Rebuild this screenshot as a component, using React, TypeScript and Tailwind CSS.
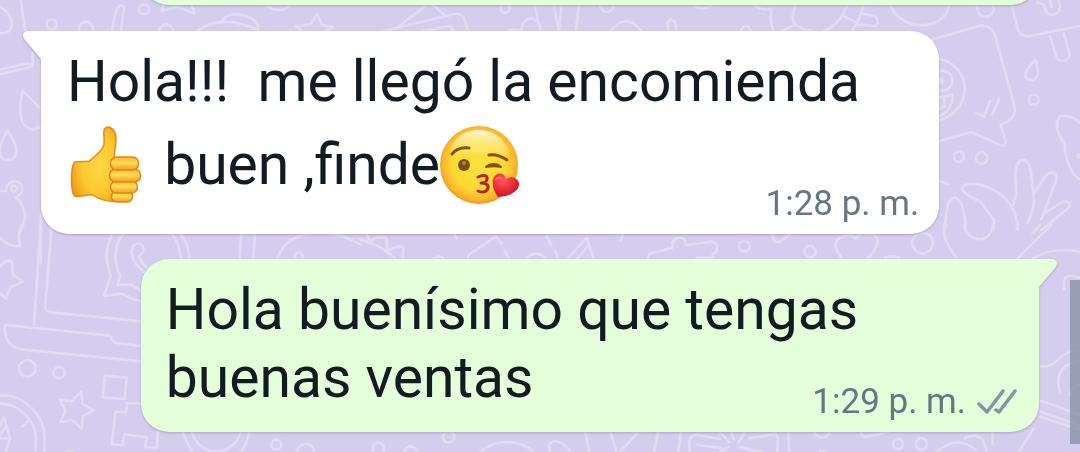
import React from 'react';

type Side = 'in' | 'out';

const STAR = 'M0 -54 L17 -20 L54 -14 L28 14 L36 50 L2 34 L-30 52 L-26 14 L-54 -12 L-18 -18 Z';

const Wallpaper = () => (
  <svg
    className="absolute inset-0 h-full w-full"
    viewBox="0 0 1080 452"
    preserveAspectRatio="xMinYMin slice"
    aria-hidden="true"
  >
    <g fill="none" stroke="#e2dbf4" strokeWidth="8" strokeLinecap="round" strokeLinejoin="round">
      <g transform="scale(.33333)">
        <path d="M0 20 C28 35 42 66 32 86 C25 99 12 101 0 99" />
        <path d="M62 0 L80 118 M97 160 L99 190 Q99 200 88 202 L0 222 M0 208 L84 190 Q96 190 97 198" />
        <circle cx="155" cy="73" r="15" />
        <path d="M238 93 A21 21 0 1 1 278 93" />
        <path d="M336 93 Q342 50 352 25 Q362 8 372 22 Q368 60 362 93" />
        <circle cx="432" cy="28" r="15" />
        <path d="M478 93 A20 20 0 1 1 518 93" />
        <path d="M492 12 L484 34 L530 20 L584 40 L574 12" />
        <path d="M590 93 C640 58 705 58 774 90 Q778 68 752 54 C724 40 684 36 666 62" />
        <path d="M905 92 L888 80 L932 72 L951 42 L966 74 L998 82 L978 93" />
        <path d="M802 18 Q836 42 870 18" />
        <path d="M68 272 C52 340 62 378 94 388 Q110 388 120 380 M68 272 L120 325" />
        <path d="M22 392 C-2 430 -14 474 20 480 C60 478 58 440 22 392 Z" />
        <circle cx="42" cy="565" r="9" />
        <path d="M0 573 H18 C16 536 70 534 66 570 Q64 584 48 592 C84 625 78 665 58 700 M123 645 L122 790" />
      </g>
      <g transform="translate(360 0) scale(.33333)">
        <path d="M72 93 L282 42 Q304 38 312 56 L324 93 M118 78 L198 16 M216 12 L254 46 M190 93 L272 78 L280 93" />
        <circle cx="435" cy="25" r="14" />
        <path d="M444 93 Q464 84 480 93 M486 90 A28 28 0 1 1 540 92 M524 18 L542 93 M582 18 L596 93 L604 18 M656 18 L648 93" />
        <path d="M720 18 Q738 54 762 20 M752 93 Q800 34 844 93 M926 93 L922 70 Q932 50 946 66 L950 93 M1004 20 Q1030 30 1054 18" />
      </g>
      <g transform="translate(720 0) scale(.33333)">
        <path d="M64 93 A14 14 0 1 1 92 93 M106 18 Q130 32 154 27 Q148 60 160 93 M226 18 Q210 54 226 74 L186 93 M226 74 Q258 93 276 93 M380 18 Q360 74 310 93 M366 46 L408 66 M430 18 Q424 52 396 93 M430 42 L464 48 Q480 60 468 78 L412 74" />
        <path d="M512 18 C546 98 674 92 686 18" />
        <path d="M772 18 A25 25 0 1 0 820 18 M876 18 L894 90 Q904 112 928 108 L1080 78 M990 108 L1008 168 C1020 192 1050 184 1048 160 L1032 102 M952 8 L972 14 Q978 50 1002 44 Q1028 34 1016 0 M990 0 L994 22" />
        <path d="M632 120 L768 80 Q808 68 824 104 L884 320 Q890 358 842 374 L856 420 Q858 444 838 434 L754 396 L656 424" />
        <path d="M656 176 C756 196 764 330 656 362 M656 214 A30 30 0 1 1 656 270 M656 294 L698 284 Q698 334 656 348 M672 294 L676 318 L656 326" />
        <circle cx="664" cy="243" r="6" />
        <path d="M768 338 L792 350 L810 304 M816 344 L838 296" />
        <path d="M948 180 Q902 220 922 236 Q944 248 954 222 Z" />
        <circle cx="941" cy="299" r="15" />
        <circle cx="717" cy="470" r="15" />
        <circle cx="785" cy="474" r="17" />
        <path d="M1080 368 Q1054 346 1020 348 C1000 374 1016 410 1034 428 C1034 480 1054 522 1080 540" />
        <circle cx="1077" cy="468" r="4" />
        <path d="M656 542 L684 552 M672 690 L684 610 Q702 576 724 610 Q738 650 736 690" />
        <path d="M820 690 L822 660 L782 606 C740 588 722 570 728 560 C750 540 836 556 876 622 Q892 650 894 690 M876 622 Q892 600 886 530 C884 470 924 466 932 510 L942 600 Q940 634 922 670 M942 580 L976 528 C1000 504 1020 526 1002 558 L964 658 M974 640 L1030 604 Q1056 602 1046 624 L964 690" />
      </g>
      <g transform="translate(0 225) scale(.33333)">
        <path d="M122 0 L102 300 M154 15 L136 240 Q134 260 154 262 L430 290 M14 300 L330 332 Q336 350 350 354 L430 364 M14 300 C12 350 36 370 70 374 L430 410" />
        <path d="M65 0 Q50 32 62 64 Q24 66 0 38 M0 124 Q22 100 36 110 L38 148 L68 170 L32 186 L18 220 L0 206" />
        <path d="M340 22 C310 70 320 118 332 152 L312 212 L366 206 Q394 224 424 228 M368 28 C340 66 342 114 360 152 L352 180 L392 178 L424 198 M540 26 Q566 50 568 100 M516 26 Q540 56 542 100" />
        <path d="M436 144 C392 114 384 66 410 56 Q436 54 428 82 L416 94 Q426 116 440 126" />
        <path d="M724 25 L718 100 M764 25 L760 100 M832 100 C866 8 990 4 1080 58" />
        <circle cx="896" cy="94" r="12" />
        <circle cx="82" cy="430" r="25" />
        <circle cx="177" cy="443" r="17" />
        <path d="M314 452 L380 458 L374 522 L308 518 Z M380 534 L426 536 M382 534 L378 562 L346 560 L336 658 L368 660 L374 628 L440 636 L436 666 L470 668 L474 620" />
        <path d={STAR} transform="translate(226 552) rotate(18)" />
        <path d="M0 512 C70 506 134 570 134 640 L132 690 M0 536 C58 534 108 590 108 640 L106 690 M66 604 L88 586 M0 604 L12 576 L30 640 L14 690 M0 640 H28 M0 630 L18 604" />
        <path d="M548 620 Q560 660 586 690 M574 620 C602 700 694 700 724 620 M748 620 Q742 660 716 690" />
        <circle cx="829" cy="659" r="15" />
        <path d="M892 690 A26 26 0 1 1 942 690 M196 684 Q210 676 224 684" />
      </g>
      <g transform="translate(360 225) scale(.33333)">
        <path d="M0 44 Q66 60 104 100 M20 25 L30 52 Q44 32 78 38 Q84 62 80 82 Q104 60 130 66 Q132 84 126 100 M284 28 L290 40 M222 100 Q238 90 250 100 M324 100 L326 90 L408 34 L424 56 M434 78 L446 98 M560 34 L574 60 M586 80 L592 98 M500 98 Q528 74 556 98 M624 100 L680 38 L700 100 M652 100 L682 64 M790 26 L782 46" />
        <path d="M864 100 L868 86 L938 68 Q934 42 954 38 Q978 34 976 60 L1058 50 Q1078 58 1068 82 L1058 88 L1060 100 M1010 98 H1060" />
        <circle cx="266" cy="636" r="17" />
        <circle cx="55" cy="670" r="17" />
        <path d="M126 690 Q150 638 180 690 M352 690 C400 638 484 638 530 690 M570 684 C554 638 606 634 638 690 M676 622 L690 690 M752 622 L772 690 L834 622 M894 622 L880 690 M962 622 L954 690 M992 690 Q978 628 1010 630 L1080 642 M1010 660 L1080 668" />
      </g>
      <g transform="translate(720 225) scale(.33333)">
        <path d="M160 28 Q154 56 180 50 L208 28 M366 100 C334 58 346 40 374 32 Q396 26 408 40 Q428 16 462 28 C486 48 466 78 442 100 M494 98 Q516 90 538 98" />
        <circle cx="73" cy="64" r="16" />
        <circle cx="270" cy="80" r="17" />
        <circle cx="608" cy="54" r="31" />
        <path d="M680 0 C660 34 690 70 710 100 M732 0 C744 56 814 58 818 0 M890 12 L896 0 M938 24 L960 0 M892 100 L994 0 M940 100 Q1000 64 1080 80 M1032 192 Q1026 156 1050 152 L1080 158 M962 424 Q990 430 1018 400 Q1050 374 1080 376 M1020 500 C1000 440 1040 412 1080 408 M962 528 C980 530 1040 556 1080 570 M962 560 L1080 602 M962 576 L1080 614 M1050 510 Q1056 484 1080 480 M940 612 L890 690" />
        <path d="M0 622 L28 652 M36 622 L40 642 M76 622 L56 650 M0 680 L26 666 M88 640 L168 626 Q178 640 170 690 M60 666 L156 690 M204 622 L208 690 M282 622 Q304 654 328 624 M422 622 Q424 638 444 634 L510 620 M640 690 C690 640 740 640 782 690 M734 640 Q764 622 788 644 L804 690 M818 622 V656 M300 680 L316 680" />
        <circle cx="534" cy="657" r="15" />
        <circle cx="604" cy="657" r="17" />
      </g>
    </g>
  </svg>
);

const ThumbsUp = () => (
  <svg
    className="inline-block h-[98px] w-[83px] align-[-30px]"
    viewBox="0 0 80 98"
    role="img"
    aria-label="👍"
  >
    <defs>
      <radialGradient id="hand" cx="0.6" cy="0.5" r="0.7">
        <stop offset="0" stopColor="#ffd846" />
        <stop offset="0.55" stopColor="#fdc930" />
        <stop offset="1" stopColor="#e8961a" />
      </radialGradient>
      <linearGradient id="finger" x1="0" y1="0" x2="0" y2="1">
        <stop offset="0" stopColor="#f8b428" />
        <stop offset="0.45" stopColor="#ffdc5a" />
        <stop offset="1" stopColor="#eda01d" />
      </linearGradient>
    </defs>
    <path
      d="M6 46 C9 45 17 46 21 45 C27 39 33 36 35 30 C37 24 34 17 36 13 C39 9 45 12 47 18 C49 27 45 35 46 42 L48 85 C38 86 30 83 24 79 C18 78 12 82 6 80 C2 75 2 52 6 46 Z"
      fill="url(#hand)"
      stroke="#e38c18"
      strokeWidth="1.5"
    />
    <g fill="url(#finger)" stroke="#df861a" strokeWidth="1.5">
      <rect x="43" y="75" width="21" height="11" rx="5" />
      <rect x="42" y="65" width="27" height="12" rx="6" />
      <rect x="41" y="53" width="31" height="13" rx="6" />
      <rect x="42" y="41" width="28" height="13" rx="6" />
    </g>
  </svg>
);

const KissFace = () => (
  <svg
    className="inline-block h-[98px] w-20 align-[-30px]"
    viewBox="0 0 80 98"
    role="img"
    aria-label="😘"
  >
    <defs>
      <radialGradient id="face" cx="0.5" cy="0.48" r="0.52">
        <stop offset="0" stopColor="#fbe33c" />
        <stop offset="0.65" stopColor="#fcd934" />
        <stop offset="0.88" stopColor="#fdb92b" />
        <stop offset="1" stopColor="#f59520" />
      </radialGradient>
      <linearGradient id="shine" x1="0" y1="0" x2="0" y2="1">
        <stop offset="0" stopColor="#fff8da" stopOpacity="0.95" />
        <stop offset="1" stopColor="#fdec7c" stopOpacity="0.25" />
      </linearGradient>
      <radialGradient id="heart" cx="0.4" cy="0.3" r="0.75">
        <stop offset="0" stopColor="#ff5a60" />
        <stop offset="0.6" stopColor="#e92636" />
        <stop offset="1" stopColor="#c1122a" />
      </radialGradient>
    </defs>
    <circle cx="39" cy="49" r="39" fill="url(#face)" />
    <path
      d="M10 36 C14 20 26 14 39 14 C53 14 66 23 69 37 C70 41 54 39 39 39 C22 39 9 42 10 36 Z"
      fill="url(#shine)"
    />
    <path
      d="M12 38 C16 33 22 31 29 32 M49 39 C55 38 61 40 67 44"
      fill="none"
      stroke="#85500c"
      strokeWidth="3"
      strokeLinecap="round"
    />
    <circle cx="24" cy="49" r="6" fill="#7b4d08" />
    <circle cx="24" cy="47" r="2" fill="#ad8546" />
    <path
      d="M46 51 C50 47 57 47 61 51 C56 50 51 50 46 51 Z"
      fill="#85500c"
      stroke="#85500c"
      strokeWidth="2"
      strokeLinejoin="round"
    />
    <path
      d="M38 61 C44 58 48 60 47 63 C47 66 43 67 41 67 C47 67 50 70 47 74 C45 77 40 76 38 75"
      fill="none"
      stroke="#b3262c"
      strokeWidth="3"
      strokeLinecap="round"
      strokeLinejoin="round"
    />
    <path
      d="M58 81 C53 75 51 65 54 61 C58 55 65 57 66 63 C71 59 78 62 79 67 C80 75 69 81 58 81 Z"
      fill="url(#heart)"
    />
    <path d="M56 64 C57 62 59 61 61 62" fill="none" stroke="#ff8080" strokeWidth="1.5" strokeLinecap="round" />
  </svg>
);

const DoubleCheck = () => (
  <svg className="h-[26px] w-10" viewBox="0 0 40 26" role="img" aria-label="Entregado">
    <path
      d="M2 15 L10 23 L26 2 M19 21 L22 23 L38 2"
      fill="none"
      stroke="#8696a0"
      strokeWidth="3.5"
      strokeLinecap="round"
      strokeLinejoin="round"
    />
  </svg>
);

const Tail = ({ side }: { side: Side }) => (
  <svg
    className={
      side === 'in'
        ? 'absolute top-0 -left-[18px] h-7 w-12 text-white'
        : 'absolute top-0 -right-[18px] h-7 w-12 -scale-x-100 text-[#e5ffda]'
    }
    viewBox="0 0 48 28"
    aria-hidden="true"
  >
    <path d="M5 0 H48 V28 H18 L2 9 C-2 4 1 0 5 0 Z" fill="currentColor" />
  </svg>
);

const Bubble = ({
  side,
  time,
  children,
}: {
  side: Side;
  time: string;
  children: React.ReactNode;
}) => (
  <article
    className={`relative grid w-9/10 rounded-[28px] pt-[17px] pb-[10px] drop-shadow-[0_1px_1px_rgba(70,60,100,0.3)] ${
      side === 'in' ? 'bg-white pr-5 pl-[26px]' : 'self-end bg-[#e5ffda] pr-[22px] pl-[25px]'
    }`}
  >
    <Tail side={side} />
    <p className="relative col-start-1 row-start-1 pb-[10px] text-[57px] leading-[68px] whitespace-pre-wrap text-[#111b21]">
      {children}
    </p>
    <footer className="relative col-start-1 row-start-1 flex items-center gap-[11px] self-end justify-self-end text-[35px] leading-10 text-[#667781]">
      <time>{time}</time>
      {side === 'out' && <DoubleCheck />}
    </footer>
  </article>
);

const ChatPage = () => {
  return (
    <main className="relative min-h-screen overflow-hidden bg-[#d5cdee] font-[Roboto,sans-serif]">
      <Wallpaper />
      <div className="relative flex flex-col gap-[25px] px-[41px] pb-5">
        {/* end of the previous message, scrolled out of view */}
        <div className="-mt-[65px] mb-px h-[70px] w-9/10 self-end rounded-[28px] bg-[#e5ffda] drop-shadow-[0_1px_1px_rgba(70,60,100,0.3)]" />
        <Bubble side="in" time="1:28 p. m.">
          {'Hola!!!  me llegó la encomienda '}
          <ThumbsUp />
          {' buen '}
          <span className="whitespace-nowrap">
            ,finde
            <KissFace />
          </span>
        </Bubble>
        <Bubble side="out" time="1:29 p. m.">
          Hola buenísimo que tengas buenas ventas
        </Bubble>
      </div>
      <div className="absolute top-[280px] right-0 h-[164px] w-[10px] bg-[#7d8a9c]/70" />
    </main>
  );
};

export default ChatPage;
